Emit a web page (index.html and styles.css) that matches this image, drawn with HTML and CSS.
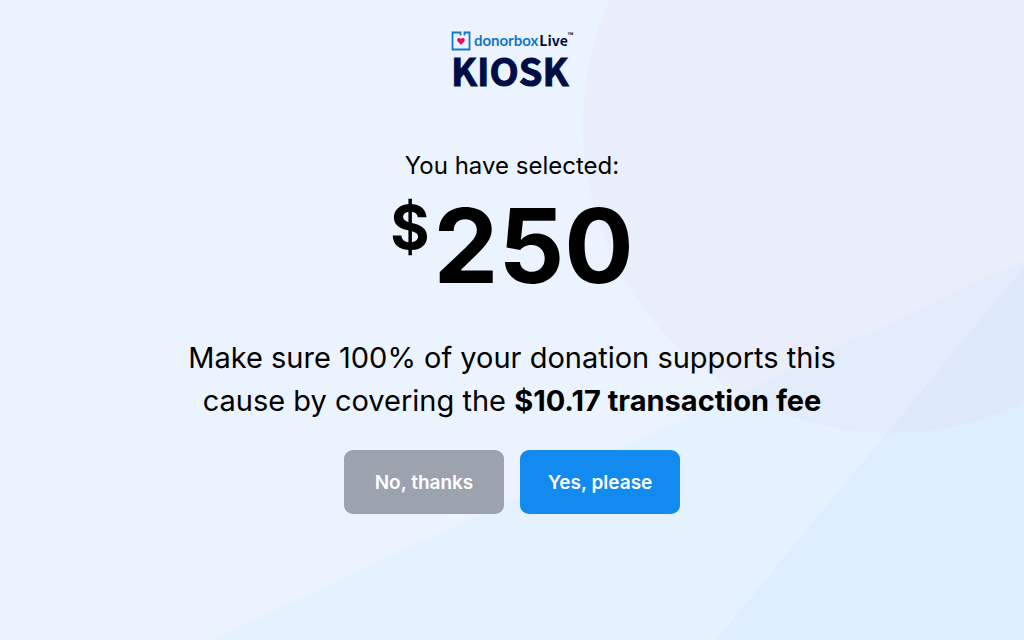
FILE: index.html
```html
<!DOCTYPE html>
<html lang="en">
<head>
<meta charset="utf-8">
<meta name="viewport" content="width=device-width, initial-scale=1">
<title>Donorbox Live Kiosk</title>
<link rel="stylesheet" href="styles.css">
</head>
<body>
<svg class="backdrop" viewBox="0 0 1024 640" preserveAspectRatio="none" aria-hidden="true">
  <path d="M211 640L1024 260V640Z" fill="#e4f1ff"/>
  <path d="M716 640L1024 267V640Z" fill="#ddeeff"/>
  <circle cx="891" cy="125" r="308" fill="rgb(228,194,208)" fill-opacity=".1"/>
</svg>
<main class="screen">
  <header class="logo">
    <div class="logo-line">
      <svg class="logo-mark" viewBox="0 0 20 20" aria-hidden="true">
        <path d="M9.500 4.500V1.500H1.500V18.500H18.500V1.500H13.500V4.500" fill="none" stroke="#1677c8" stroke-width="1.800"/>
        <path d="M10 13.700L6.700 10.400C5 8.200 7.800 5.500 10 7.900C12.200 5.500 15 8.200 13.300 10.400Z" fill="#f5084f"/>
      </svg>
      <span class="logo-name">donorbox</span>
      <span class="logo-live">Live</span>
      <span class="logo-tm">™</span>
    </div>
    <div class="logo-kiosk">KIOSK</div>
  </header>
  <p class="lead">You have selected:</p>
  <p class="amount"><span class="currency">$</span><span>250</span></p>
  <p class="message">Make sure 100% of your donation supports this cause by covering the <strong>$10.17 transaction fee</strong></p>
  <div class="actions">
    <button class="button button-muted" type="button">No, thanks</button>
    <button class="button button-primary" type="button">Yes, please</button>
  </div>
</main>
</body>
</html>
```
FILE: styles.css
```css
* { box-sizing: border-box; }

body {
  margin: 0;
  background: #ebf3ff;
  color: #000;
  font-family: Inter, "Liberation Sans", sans-serif;
}

p { margin: 0; }

.backdrop {
  position: absolute;
  inset: 0;
  width: 100%;
  height: 100%;
  z-index: -1;
}

.screen {
  display: flex;
  flex-direction: column;
  align-items: center;
  min-height: 100vh;
  padding: 31px 24px 24px;
  text-align: center;
}

.logo {
  display: flex;
  flex-direction: column;
  align-items: flex-start;
  color: #000d45;
}

.logo-line {
  display: flex;
  align-items: flex-start;
  height: 20px;
}

.logo-mark {
  width: 20px;
  height: 20px;
  margin-right: 3px;
}

.logo-name {
  color: #1677c8;
  font: 700 15px/18px Lato, sans-serif;
}

.logo-live {
  margin-left: 1px;
  font: 700 14px/18px "Noto Sans CJK SC", "Noto Sans", sans-serif;
}

.logo-tm {
  font: 700 7px/9px "Noto Sans CJK SC", "Noto Sans", sans-serif;
}

.logo-kiosk {
  font: 700 38px/38px "Noto Sans CJK SC", "Noto Sans", sans-serif;
  -webkit-text-stroke: 1px #000d45;
}

.lead {
  margin-top: 59px;
  font-size: 24px;
  line-height: 36px;
}

.amount {
  display: flex;
  align-items: flex-start;
  gap: 4px;
  margin-top: 8px;
  font-size: 103px;
  font-weight: 700;
  line-height: 108px;
}

.currency {
  font-size: 60px;
  line-height: 70px;
}

.message {
  max-width: 680px;
  margin-top: 36px;
  font-size: 29px;
  line-height: 43px;
}

.message strong { font-weight: 700; }

.actions {
  display: flex;
  gap: 16px;
  margin-top: 28px;
}

.button {
  width: 160px;
  height: 64px;
  padding: 2px 0 0;
  border: 0;
  border-radius: 9px;
  color: #fff;
  font: 600 19px/24px Inter, sans-serif;
}

.button-muted { background: #9ca2ae; }

.button-primary { background: #138aef; }
```
